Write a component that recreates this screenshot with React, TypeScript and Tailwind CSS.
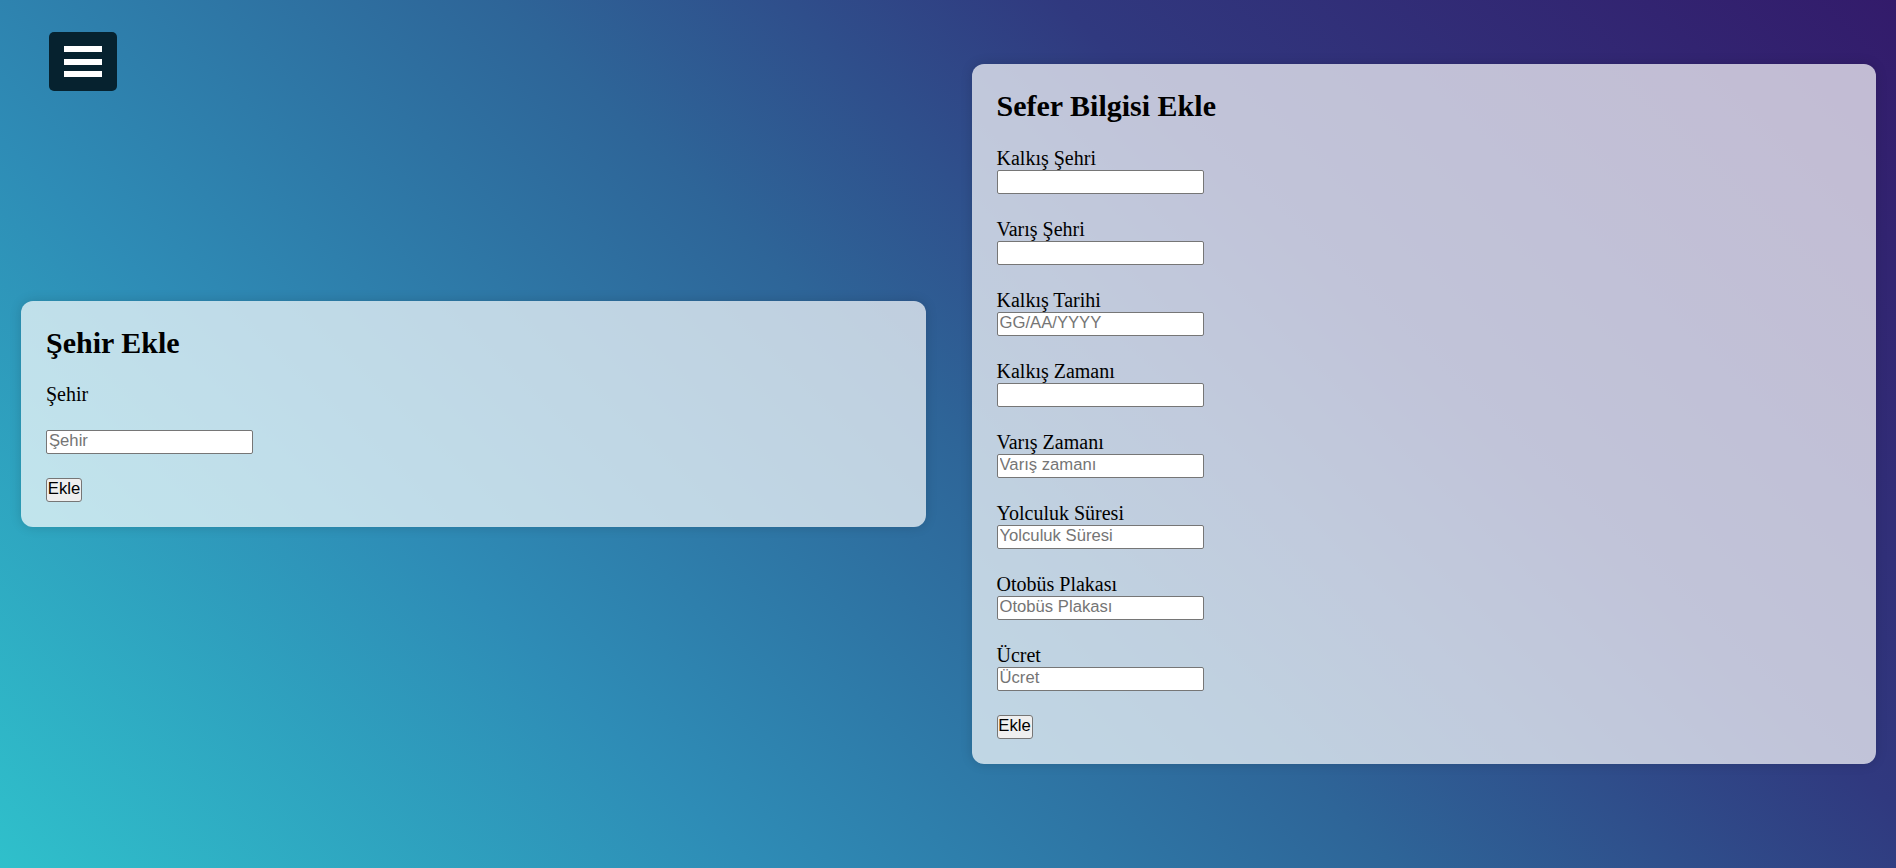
import type { ReactNode } from 'react'

const serif = { fontFamily: '"Liberation Serif", "Times New Roman", serif' }

const fields = [
  { label: 'Kalkış Şehri', placeholder: '' },
  { label: 'Varış Şehri', placeholder: '' },
  { label: 'Kalkış Tarihi', placeholder: 'GG/AA/YYYY' },
  { label: 'Kalkış Zamanı', placeholder: '' },
  { label: 'Varış Zamanı', placeholder: 'Varış zamanı' },
  { label: 'Yolculuk Süresi', placeholder: 'Yolculuk Süresi' },
  { label: 'Otobüs Plakası', placeholder: 'Otobüs Plakası' },
  { label: 'Ücret', placeholder: 'Ücret' },
]

function Input({ placeholder, className = '' }: { placeholder?: string; className?: string }) {
  return (
    <input
      type="text"
      placeholder={placeholder}
      className={`block h-[24px] w-[207px] rounded-[2px] border border-[#767676] bg-white px-[2px] font-['Liberation_Sans',Arial,sans-serif] text-[16.67px] text-black placeholder:text-[#757575] outline-none ${className}`}
    />
  )
}

function Button() {
  return (
    <button className="block h-[24px] w-[36px] rounded-[3px] border border-[#767676] bg-[#efefef] font-['Liberation_Sans',Arial,sans-serif] text-[16.67px] leading-none text-black">
      Ekle
    </button>
  )
}

function Card({ title, children }: { title: string; children: ReactNode }) {
  return (
    <div className="flex-1 rounded-[12px] bg-white/70 px-[25px] pt-[25px] pb-[25px] shadow-[0_0_12px_rgba(0,0,0,0.15)]" style={serif}>
      <h2 className="text-[30px] font-bold leading-[33px] text-black">{title}</h2>
      {children}
    </div>
  )
}

export default function App() {
  return (
    <div className="relative h-[868px] w-full overflow-hidden bg-[linear-gradient(44deg,#2fc0cb_0%,#2e8cb6_27%,#2e6598_50%,#30397f_70%,#331b6b_100%)]">
      <button className="absolute left-[49px] top-[32px] flex h-[59px] w-[68px] flex-col items-center justify-center gap-[6.5px] rounded-[5px] bg-[#06222f]">
        <span className="block h-[6px] w-[38px] bg-white" />
        <span className="block h-[6px] w-[38px] bg-white" />
        <span className="block h-[6px] w-[38px] bg-white" />
      </button>

      <div className="flex h-full items-center gap-[46px] pl-[21px] pr-[20px] pb-[41px]">
        <Card title="Şehir Ekle">
          <div className="mt-[24px] text-[20px] leading-[23px] text-black">Şehir</div>
          <Input placeholder="Şehir" className="mt-[24px] w-[206px]" />
          <div className="mt-[24px]">
            <Button />
          </div>
        </Card>

        <Card title="Sefer Bilgisi Ekle">
          <div className="mt-[24px] flex flex-col gap-[23px]">
            {fields.map((f) => (
              <div key={f.label}>
                <div className="text-[20px] leading-[24px] text-black">{f.label}</div>
                <Input placeholder={f.placeholder} />
              </div>
            ))}
          </div>
          <div className="mt-[24px]">
            <Button />
          </div>
        </Card>
      </div>
    </div>
  )
}
